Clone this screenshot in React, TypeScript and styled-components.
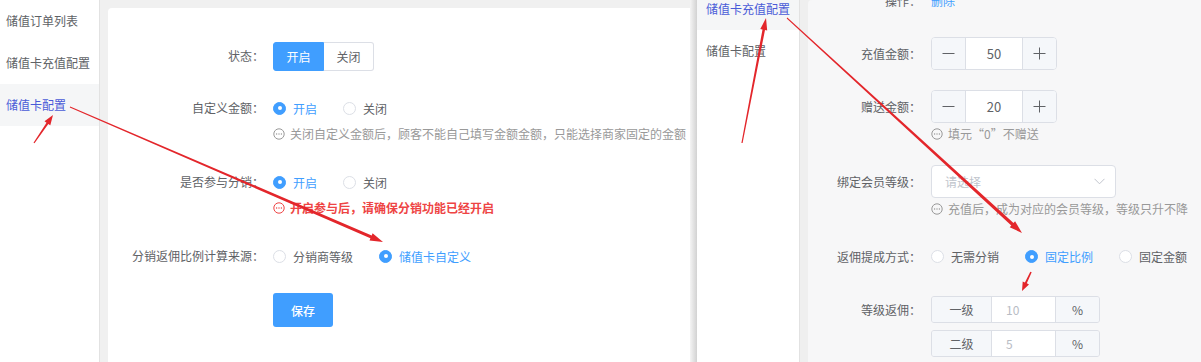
import styled, { createGlobalStyle } from "styled-components";

const GlobalStyle = createGlobalStyle`
  html, body {
    margin: 0;
    padding: 0;
  }
  body {
    font-family: "Noto Sans CJK SC", "Noto Sans", sans-serif;
    font-size: 12px;
    color: #606266;
    background: #fff;
  }
`;

const Page = styled.div`
  position: relative;
  display: flex;
  width: 1201px;
  height: 362px;
  overflow: hidden;
`;

const Screen = styled.div<{ $width: number }>`
  display: flex;
  flex-shrink: 0;
  width: ${(p) => p.$width}px;
  height: 100%;
`;

const Sidebar = styled.ul<{ $width: number; $offset: number }>`
  flex-shrink: 0;
  width: ${(p) => p.$width}px;
  margin: 0;
  padding: ${(p) => p.$offset}px 0 0;
  list-style: none;
  background: #fff;
  border-right: 1px solid #e2e2e2;
`;

const MenuItem = styled.li<{ $active?: boolean; $pad: number }>`
  height: 42px;
  line-height: 42px;
  padding-left: ${(p) => p.$pad}px;
  font-size: 12px;
  white-space: nowrap;
  color: ${(p) => (p.$active ? "#4a5bd8" : "#606266")};
  background: ${(p) => (p.$active ? "#f5f6f7" : "transparent")};
`;

const Gutter = styled.div<{ $top: number; $bg: string }>`
  flex: 1;
  display: flex;
  padding: ${(p) => p.$top}px 0 0 8px;
  background: ${(p) => p.$bg};
  overflow: hidden;
`;

const Card = styled.div<{ $bg: string }>`
  flex: 1;
  background: ${(p) => p.$bg};
  border-top-left-radius: 4px;
`;

const EdgeShade = styled.div`
  flex-shrink: 0;
  width: 7px;
  background: linear-gradient(to right, #f4f4f4, #d2d2d2);
`;

const Form = styled.div<{ $top: number }>`
  margin-top: ${(p) => p.$top}px;
`;

const FormItem = styled.div<{ $label: number; $gap: number; $mb: number }>`
  display: grid;
  grid-template-columns: ${(p) => p.$label}px 1fr;
  column-gap: ${(p) => p.$gap}px;
  margin-bottom: ${(p) => p.$mb}px;
`;

const Label = styled.div<{ $h: number }>`
  height: ${(p) => p.$h}px;
  line-height: ${(p) => p.$h}px;
  text-align: right;
  white-space: nowrap;
  color: #606266;
`;

const Field = styled.div`
  display: flex;
  flex-direction: column;
  align-items: flex-start;
`;

const Control = styled.div<{ $h: number }>`
  display: flex;
  align-items: center;
  min-height: ${(p) => p.$h}px;
`;

const Hint = styled.div<{ $danger?: boolean }>`
  display: flex;
  align-items: center;
  gap: 5px;
  margin: 1px 0;
  line-height: 20px;
  white-space: nowrap;
  color: ${(p) => (p.$danger ? "#ee4444" : "#999999")};
  font-weight: ${(p) => (p.$danger ? 700 : 400)};
`;

const SegGroup = styled.div`
  display: inline-flex;
  height: 29px;
`;

const SegButton = styled.div<{ $active?: boolean }>`
  display: flex;
  align-items: center;
  justify-content: center;
  width: ${(p) => (p.$active ? 51 : 50)}px;
  box-sizing: border-box;
  border: 1px solid ${(p) => (p.$active ? "#409eff" : "#dcdfe6")};
  background: ${(p) => (p.$active ? "#409eff" : "#fff")};
  color: ${(p) => (p.$active ? "#fff" : "#606266")};
  &:first-child {
    border-radius: 3px 0 0 3px;
  }
  &:last-child {
    border-left: none;
    border-radius: 0 3px 3px 0;
  }
`;

const RadioGroup = styled.div`
  display: flex;
  align-items: center;
  gap: 26px;
`;

const RadioItem = styled.label`
  display: flex;
  align-items: center;
  gap: 7px;
  white-space: nowrap;
`;

const RadioDot = styled.span<{ $checked?: boolean }>`
  position: relative;
  width: 13px;
  height: 13px;
  box-sizing: border-box;
  border-radius: 50%;
  border: 1px solid ${(p) => (p.$checked ? "#409eff" : "#dcdfe6")};
  background: ${(p) => (p.$checked ? "#409eff" : "#fff")};
  &::after {
    content: "";
    position: absolute;
    left: 50%;
    top: 50%;
    width: 4px;
    height: 4px;
    margin: -2px 0 0 -2px;
    border-radius: 50%;
    background: #fff;
    display: ${(p) => (p.$checked ? "block" : "none")};
  }
`;

const RadioText = styled.span<{ $checked?: boolean }>`
  color: ${(p) => (p.$checked ? "#409eff" : "#606266")};
`;

const PrimaryButton = styled.button`
  width: 60px;
  height: 34px;
  border: none;
  border-radius: 3px;
  background: #409eff;
  color: #fff;
  font-family: inherit;
  font-size: 12px;
  font-weight: 500;
`;

const LinkText = styled.span`
  color: #409eff;
`;

const Stepper = styled.div`
  display: flex;
  width: 126px;
  height: 33px;
  box-sizing: border-box;
  border: 1px solid #dcdfe6;
  border-radius: 4px;
  overflow: hidden;
  background: #fff;
`;

const StepButton = styled.div`
  display: flex;
  align-items: center;
  justify-content: center;
  width: 33px;
  background: #f5f7fa;
  color: #606266;
  &:first-child {
    border-right: 1px solid #dcdfe6;
  }
  &:last-child {
    border-left: 1px solid #dcdfe6;
  }
`;

const StepValue = styled.div`
  flex: 1;
  display: flex;
  align-items: center;
  justify-content: center;
  font-size: 13px;
  color: #606266;
`;

const SelectBox = styled.div`
  display: flex;
  align-items: center;
  justify-content: space-between;
  width: 185px;
  height: 33px;
  box-sizing: border-box;
  padding: 0 10px 0 13px;
  border: 1px solid #dcdfe6;
  border-radius: 4px;
  background: #fff;
  color: #c0c4cc;
`;

const InputGroup = styled.div<{ $mt?: number }>`
  display: flex;
  width: 169px;
  height: 27px;
  margin-top: ${(p) => p.$mt ?? 0}px;
  box-sizing: border-box;
  border: 1px solid #dcdfe6;
  border-radius: 3px;
  overflow: hidden;
`;

const Addon = styled.div<{ $w: number }>`
  display: flex;
  align-items: center;
  justify-content: center;
  width: ${(p) => p.$w}px;
  background: #f5f7fa;
  color: #606266;
`;

const GroupInput = styled.div`
  display: flex;
  align-items: center;
  width: 65px;
  box-sizing: border-box;
  padding-left: 14px;
  background: #fff;
  border-left: 1px solid #dcdfe6;
  border-right: 1px solid #dcdfe6;
  color: #b8bcc4;
`;

const ArrowLayer = styled.svg`
  position: absolute;
  left: 0;
  top: 0;
  pointer-events: none;
`;

const MoreIcon = () => (
  <svg width="12" height="12" viewBox="0 0 12 12">
    <circle cx="6" cy="6" r="5.2" fill="none" stroke="currentColor" strokeWidth="1" />
    <circle cx="3.6" cy="6" r="0.7" fill="currentColor" />
    <circle cx="6" cy="6" r="0.7" fill="currentColor" />
    <circle cx="8.4" cy="6" r="0.7" fill="currentColor" />
  </svg>
);

const Sign = ({ plus }: { plus?: boolean }) => (
  <svg width="13" height="13" viewBox="0 0 13 13">
    <line x1="0.5" y1="6.5" x2="12.5" y2="6.5" stroke="#606266" strokeWidth="1" />
    {plus && <line x1="6.5" y1="0.5" x2="6.5" y2="12.5" stroke="#606266" strokeWidth="1" />}
  </svg>
);

const Chevron = () => (
  <svg width="11" height="7" viewBox="0 0 11 7">
    <polyline points="0.5,0.8 5.5,5.8 10.5,0.8" fill="none" stroke="#c0c4cc" strokeWidth="1" />
  </svg>
);

type Arrow = { from: [number, number]; to: [number, number]; w1: number; w2: number; head: number; hw: number };

const arrows: Arrow[] = [
  { from: [34, 143], to: [53, 115], w1: 1.2, w2: 2.2, head: 10, hw: 7 },
  { from: [70, 107], to: [383, 242], w1: 1, w2: 3.2, head: 13, hw: 8 },
  { from: [742, 143], to: [766, 18], w1: 1.2, w2: 2.6, head: 12, hw: 7 },
  { from: [787, 18], to: [1022, 233], w1: 1, w2: 3.2, head: 13, hw: 8 },
  { from: [1031, 272], to: [1022, 291], w1: 1.6, w2: 2.2, head: 9, hw: 7 },
];

const arrowPoints = ({ from, to, w1, w2, head, hw }: Arrow) => {
  const [x1, y1] = from;
  const [x2, y2] = to;
  const len = Math.hypot(x2 - x1, y2 - y1);
  const ux = (x2 - x1) / len;
  const uy = (y2 - y1) / len;
  const nx = -uy;
  const ny = ux;
  const bx = x2 - ux * head;
  const by = y2 - uy * head;
  const pts = [
    [x1 + (nx * w1) / 2, y1 + (ny * w1) / 2],
    [bx + (nx * w2) / 2, by + (ny * w2) / 2],
    [bx + (nx * hw) / 2, by + (ny * hw) / 2],
    [x2, y2],
    [bx - (nx * hw) / 2, by - (ny * hw) / 2],
    [bx - (nx * w2) / 2, by - (ny * w2) / 2],
    [x1 - (nx * w1) / 2, y1 - (ny * w1) / 2],
  ];
  return pts.map((p) => `${p[0].toFixed(1)},${p[1].toFixed(1)}`).join(" ");
};

const Radio = ({ text, checked }: { text: string; checked?: boolean }) => (
  <RadioItem>
    <RadioDot $checked={checked} />
    <RadioText $checked={checked}>{text}</RadioText>
  </RadioItem>
);

const L = { label: 156, gap: 9, mb: 22, h: 30 };
const R = { label: 113, gap: 10, mb: 20, h: 33 };

const App = () => {
  return (
    <Page>
      <GlobalStyle />

      <Screen $width={697}>
        <Sidebar $width={99} $offset={0}>
          <MenuItem $pad={6}>储值订单列表</MenuItem>
          <MenuItem $pad={6}>储值卡充值配置</MenuItem>
          <MenuItem $pad={6} $active>
            储值卡配置
          </MenuItem>
        </Sidebar>
        <Gutter $top={8} $bg="#f0f0f0">
          <Card $bg="#fff">
            <Form $top={33}>
              <FormItem $label={L.label} $gap={L.gap} $mb={L.mb}>
                <Label $h={L.h}>状态：</Label>
                <Field>
                  <Control $h={L.h}>
                    <SegGroup>
                      <SegButton $active>开启</SegButton>
                      <SegButton>关闭</SegButton>
                    </SegGroup>
                  </Control>
                </Field>
              </FormItem>

              <FormItem $label={L.label} $gap={L.gap} $mb={L.mb}>
                <Label $h={L.h}>自定义金额：</Label>
                <Field>
                  <Control $h={L.h}>
                    <RadioGroup>
                      <Radio text="开启" checked />
                      <Radio text="关闭" />
                    </RadioGroup>
                  </Control>
                  <Hint>
                    <MoreIcon />
                    关闭自定义金额后，顾客不能自己填写金额金额，只能选择商家固定的金额
                  </Hint>
                </Field>
              </FormItem>

              <FormItem $label={L.label} $gap={L.gap} $mb={L.mb}>
                <Label $h={L.h}>是否参与分销：</Label>
                <Field>
                  <Control $h={L.h}>
                    <RadioGroup>
                      <Radio text="开启" checked />
                      <Radio text="关闭" />
                    </RadioGroup>
                  </Control>
                  <Hint $danger>
                    <MoreIcon />
                    开启参与后，请确保分销功能已经开启
                  </Hint>
                </Field>
              </FormItem>

              <FormItem $label={L.label} $gap={L.gap} $mb={L.mb}>
                <Label $h={L.h}>分销返佣比例计算来源：</Label>
                <Field>
                  <Control $h={L.h}>
                    <RadioGroup>
                      <Radio text="分销商等级" />
                      <Radio text="储值卡自定义" checked />
                    </RadioGroup>
                  </Control>
                </Field>
              </FormItem>

              <FormItem $label={L.label} $gap={L.gap} $mb={0}>
                <span />
                <Field>
                  <PrimaryButton>保存</PrimaryButton>
                </Field>
              </FormItem>
            </Form>
          </Card>
        </Gutter>
        <EdgeShade />
      </Screen>

      <Screen $width={504}>
        <Sidebar $width={102} $offset={0}>
          <MenuItem $pad={9} $active style={{ marginTop: -12 }}>
            储值卡充值配置
          </MenuItem>
          <MenuItem $pad={9}>储值卡配置</MenuItem>
        </Sidebar>
        <Gutter $top={0} $bg="#efefef">
          <Card $bg="#f7f7f8">
            <Form $top={-16}>
              <FormItem $label={R.label} $gap={R.gap} $mb={R.mb}>
                <Label $h={R.h}>操作：</Label>
                <Field>
                  <Control $h={R.h}>
                    <LinkText>删除</LinkText>
                  </Control>
                </Field>
              </FormItem>

              <FormItem $label={R.label} $gap={R.gap} $mb={R.mb}>
                <Label $h={R.h}>充值金额：</Label>
                <Field>
                  <Stepper>
                    <StepButton>
                      <Sign />
                    </StepButton>
                    <StepValue>50</StepValue>
                    <StepButton>
                      <Sign plus />
                    </StepButton>
                  </Stepper>
                </Field>
              </FormItem>

              <FormItem $label={R.label} $gap={R.gap} $mb={R.mb}>
                <Label $h={R.h}>赠送金额：</Label>
                <Field>
                  <Stepper>
                    <StepButton>
                      <Sign />
                    </StepButton>
                    <StepValue>20</StepValue>
                    <StepButton>
                      <Sign plus />
                    </StepButton>
                  </Stepper>
                  <Hint>
                    <MoreIcon />
                    填元“0”不赠送
                  </Hint>
                </Field>
              </FormItem>

              <FormItem $label={R.label} $gap={R.gap} $mb={R.mb}>
                <Label $h={R.h}>绑定会员等级：</Label>
                <Field>
                  <SelectBox>
                    请选择
                    <Chevron />
                  </SelectBox>
                  <Hint>
                    <MoreIcon />
                    充值后，成为对应的会员等级，等级只升不降
                  </Hint>
                </Field>
              </FormItem>

              <FormItem $label={R.label} $gap={R.gap} $mb={23}>
                <Label $h={R.h}>返佣提成方式：</Label>
                <Field>
                  <Control $h={R.h}>
                    <RadioGroup>
                      <Radio text="无需分销" />
                      <Radio text="固定比例" checked />
                      <Radio text="固定金额" />
                    </RadioGroup>
                  </Control>
                </Field>
              </FormItem>

              <FormItem $label={R.label} $gap={R.gap} $mb={0}>
                <Label $h={27}>等级返佣：</Label>
                <Field>
                  <InputGroup>
                    <Addon $w={59}>一级</Addon>
                    <GroupInput>10</GroupInput>
                    <Addon $w={43}>%</Addon>
                  </InputGroup>
                  <InputGroup $mt={7}>
                    <Addon $w={59}>二级</Addon>
                    <GroupInput>5</GroupInput>
                    <Addon $w={43}>%</Addon>
                  </InputGroup>
                </Field>
              </FormItem>
            </Form>
          </Card>
        </Gutter>
      </Screen>

      <ArrowLayer width={1201} height={362} viewBox="0 0 1201 362">
        {arrows.map((a, i) => (
          <polygon key={`arrow${i}`} points={arrowPoints(a)} fill="#e3262b" />
        ))}
      </ArrowLayer>
    </Page>
  );
};

export default App;
